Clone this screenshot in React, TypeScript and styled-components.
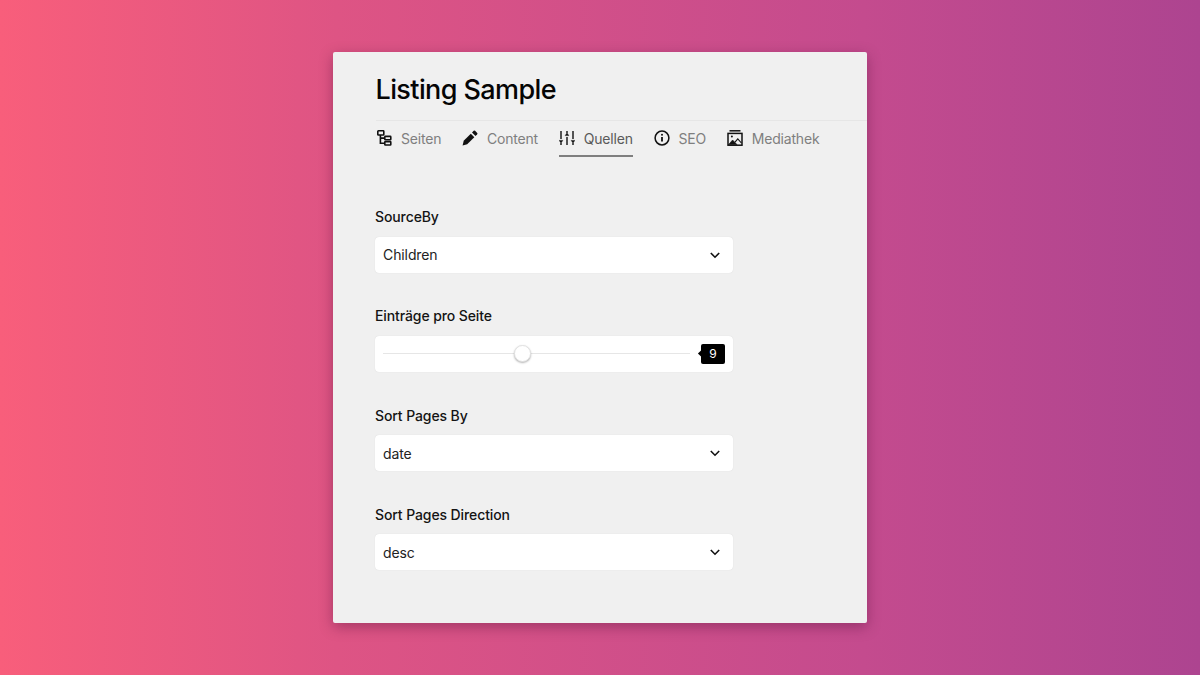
import React from 'react';
import styled, { createGlobalStyle } from 'styled-components';

const GlobalStyle = createGlobalStyle`
  html, body {
    margin: 0;
    padding: 0;
    height: 100%;
  }
  body {
    font-family: 'Inter', sans-serif;
    -webkit-font-smoothing: antialiased;
  }
`;

const SeitenIcon = () => (
  <TabSvg viewBox="0 0 16 16" fill="none" stroke="#111" strokeWidth="1.6">
    <rect x="1.8" y="0.8" width="6" height="4.2" rx="0.6" />
    <rect x="8.8" y="6.4" width="6" height="3.4" rx="0.6" />
    <rect x="8.8" y="11.6" width="6" height="3.4" rx="0.6" />
    <path d="M4.4 5v8.3h4.4M4.4 8.1h4.4" />
  </TabSvg>
);

const PencilIcon = () => (
  <TabSvg viewBox="0 0 16 16" fill="#111">
    <path d="M.6 15.4l1.1-4.6 7.1-7.1 3.5 3.5-7.1 7.1z" />
    <path d="M10 2.5l1.7-1.7a1 1 0 0 1 1.4 0l2.1 2.1a1 1 0 0 1 0 1.4l-1.7 1.7z" />
  </TabSvg>
);

const SlidersIcon = () => (
  <TabSvg viewBox="0 0 16 16" fill="none" stroke="#111" strokeWidth="1.4">
    <path d="M2 1v8M2 13v2M8 1v2M8 7v8M14 1v8M14 13v2" />
    <path d="M.2 10.4h3.6L2 13zM6.2 5.6h3.6L8 3zM12.2 10.4h3.6L14 13z" fill="#111" strokeWidth="0.5" />
  </TabSvg>
);

const InfoIcon = () => (
  <TabSvg viewBox="0 0 16 16" fill="none" stroke="#111" strokeWidth="1.5">
    <circle cx="8" cy="8" r="6.9" />
    <path d="M8 7v4.6" strokeWidth="1.8" />
    <circle cx="8" cy="4.7" r="1" fill="#111" stroke="none" />
  </TabSvg>
);

const MediaIcon = () => (
  <TabSvg viewBox="0 0 16 16" fill="none" stroke="#111" strokeWidth="1.5">
    <path d="M2.5.8h11" />
    <rect x="1" y="3.4" width="14" height="11.8" />
    <path d="M1.6 14.6l4-4.6 4.4 4.6z" fill="#111" strokeWidth="0.6" />
    <circle cx="4.9" cy="6.6" r="1" fill="#111" stroke="none" />
    <path d="M8 12.2l2.8-3.4 3.6 4.2" strokeWidth="1.1" />
  </TabSvg>
);

const Chevron = () => (
  <ChevronSvg viewBox="0 0 12 12" fill="none" stroke="#111" strokeWidth="1.6">
    <path d="M1.8 4l4.2 4.2L10.2 4" />
  </ChevronSvg>
);

const tabs = [
  { label: 'Seiten', icon: <SeitenIcon /> },
  { label: 'Content', icon: <PencilIcon /> },
  { label: 'Quellen', icon: <SlidersIcon />, active: true },
  { label: 'SEO', icon: <InfoIcon /> },
  { label: 'Mediathek', icon: <MediaIcon /> },
];

const App: React.FC = () => {
  return (
    <Page>
      <GlobalStyle />
      <Panel>
        <Header>
          <Title>Listing Sample</Title>
        </Header>
        <Tabs>
          {tabs.map((tab) => (
            <Tab key={tab.label} $active={tab.active}>
              {tab.icon}
              {tab.label}
            </Tab>
          ))}
        </Tabs>
        <Form>
          <Field>
            <Label>SourceBy</Label>
            <SelectBox>
              Children
              <Chevron />
            </SelectBox>
          </Field>
          <Field>
            <Label>Einträge pro Seite</Label>
            <SliderBox>
              <Track>
                <Thumb />
              </Track>
              <Bubble>9</Bubble>
            </SliderBox>
          </Field>
          <Field>
            <Label>Sort Pages By</Label>
            <SelectBox>
              date
              <Chevron />
            </SelectBox>
          </Field>
          <Field>
            <Label>Sort Pages Direction</Label>
            <SelectBox>
              desc
              <Chevron />
            </SelectBox>
          </Field>
        </Form>
      </Panel>
    </Page>
  );
};

const Page = styled.div`
  width: 1200px;
  height: 675px;
  padding-top: 52px;
  box-sizing: border-box;
  overflow: hidden;
  background: linear-gradient(90deg, #f85e7b 0%, #de5484 28%, #c44b8e 72%, #ad4490 100%);
`;

const Panel = styled.div`
  width: 534px;
  height: 571px;
  margin: 0 auto;
  background: #f0f0f0;
  border-radius: 2px;
  box-shadow: 0 4px 14px rgba(60, 10, 40, 0.35);
`;

const Header = styled.div`
  margin-left: 43px;
  height: 69px;
  box-sizing: border-box;
  padding-top: 20px;
  border-bottom: 1px solid #e6e6e6;
`;

const Title = styled.h1`
  margin: 0;
  margin-left: -0.5px;
  font-size: 27px;
  line-height: 36px;
  font-weight: 500;
  letter-spacing: -0.6px;
  color: #050505;
`;

const Tabs = styled.div`
  display: flex;
  gap: 20.8px;
  margin-left: 43px;
  height: 36px;
`;

const Tab = styled.div<{ $active?: boolean }>`
  display: flex;
  align-items: center;
  gap: 9px;
  height: 36px;
  box-sizing: border-box;
  font-size: 14px;
  letter-spacing: -0.2px;
  color: ${(p) => (p.$active ? '#5a5a5a' : '#7f7f7f')};
  border-bottom: 2px solid ${(p) => (p.$active ? '#7f7f7f' : 'transparent')};
`;

const TabSvg = styled.svg`
  width: 16px;
  height: 16px;
  flex: none;
`;

const ChevronSvg = styled.svg`
  width: 12px;
  height: 12px;
  flex: none;
`;

const Form = styled.div`
  display: flex;
  flex-direction: column;
  gap: 33.83px;
  margin: 50px 0 0 42px;
  width: 358px;
`;

const Field = styled.div`
  display: flex;
  flex-direction: column;
  gap: 9.5px;
`;

const Label = styled.label`
  font-size: 14px;
  line-height: 20px;
  font-weight: 500;
  letter-spacing: -0.1px;
  color: #141414;
`;

const SelectBox = styled.div`
  display: flex;
  align-items: center;
  justify-content: space-between;
  height: 36px;
  box-sizing: border-box;
  padding: 0 12px 0 8px;
  background: #fff;
  border-radius: 4px;
  font-size: 14px;
  letter-spacing: -0.1px;
  color: #222;
  box-shadow: 0 0 1px rgba(0, 0, 0, 0.15);
`;

const SliderBox = styled(SelectBox)`
  padding: 0 8px;
  gap: 11px;
`;

const Track = styled.div`
  position: relative;
  flex: 1;
  height: 1px;
  background: #e6e6e6;
`;

const Thumb = styled.div`
  position: absolute;
  left: 130.5px;
  top: -8px;
  width: 17px;
  height: 17px;
  box-sizing: border-box;
  border-radius: 50%;
  background: #fff;
  border: 1px solid #e2e2e2;
  box-shadow: 0 1px 2px rgba(0, 0, 0, 0.3);
`;

const Bubble = styled.div`
  position: relative;
  width: 24px;
  height: 20px;
  border-radius: 2px;
  background: #000;
  color: #fff;
  font-size: 12px;
  line-height: 20px;
  letter-spacing: 0;
  text-align: center;

  &::before {
    content: '';
    position: absolute;
    left: -2px;
    top: 7.5px;
    width: 5px;
    height: 5px;
    background: #000;
    transform: rotate(45deg);
  }
`;

export default App;
